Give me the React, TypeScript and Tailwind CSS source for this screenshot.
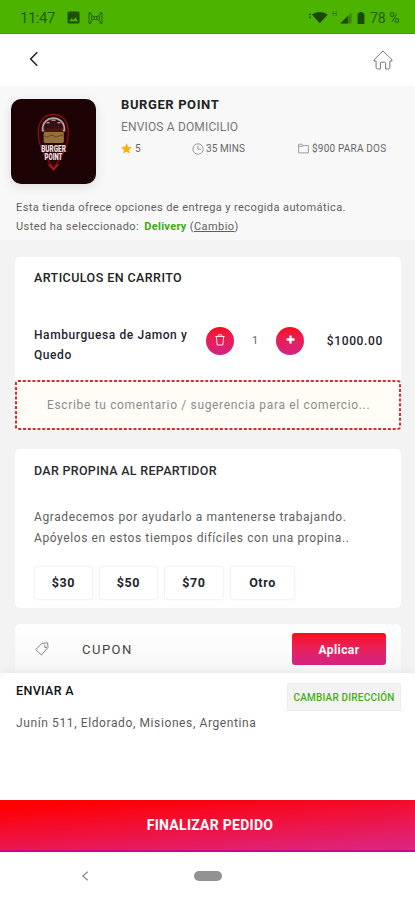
const tips = [
  { label: '$30', width: 'w-[59px]' },
  { label: '$50', width: 'w-[59px]' },
  { label: '$70', width: 'w-[60px]' },
  { label: 'Otro', width: 'w-[65px]' },
];

function StatusBar() {
  return (
    <div className="flex h-[34px] shrink-0 items-center border-b border-[#35a000] bg-[#4cb400] pl-5 pr-[15px] pt-[3px] text-[#235c05]">
      <span className="w-[47px] whitespace-nowrap text-[15px] leading-none tracking-[-0.5px]">11:47</span>
      <svg className="-mt-px h-[13px] w-[13px]" viewBox="0 0 13 13">
        <rect x="0.5" y="0.5" width="12" height="12" rx="1.5" fill="#1f5104" />
        <path d="M2.3 10.2 4.6 7.2 6.3 9 8.5 6.3 11 10.2Z" fill="#4cb400" />
      </svg>
      <svg className="-mt-px ml-2 h-3 w-[15px]" viewBox="0 0 15 12" fill="none" stroke="#235c05" strokeWidth="1">
        <path d="M3.500 .8H1V11.2H3.500M11.500 .8H14V11.2H11.500M1.500 1.300 13.500 10.700M1.500 10.700 13.500 1.300M3.700 4V8M11.300 4V8" />
        <circle cx="7.5" cy="6" r="1.5" fill="#4cb400" />
      </svg>
      <div className="ml-auto flex items-center">
        <svg className="-mt-[2px] h-[13px] w-[19px]" viewBox="0 0 19 13" fill="#194a03">
          <path d="M3 3.8C7 .2 14.4 .2 18.6 3.8L10.8 12.3Z" />
          <path d="M.3 2.5h1.5v1.8H.3zM.3 5.5h1.5v1.8H.3z" />
        </svg>
        <span className="-mt-[7px] ml-[4px] text-[7px] leading-none">H</span>
        <svg className="ml-[3px] h-3 w-3" viewBox="0 0 12 12">
          <path d="M.3 11.5 11.5.5V11.5Z" fill="#3c8606" />
          <path d="M.3 11.5 7.8 4V11.5Z" fill="#194a03" />
        </svg>
        <svg className="ml-[5px] h-3 w-2" viewBox="0 0 8 12" fill="#194a03">
          <path d="M2.4 0h3.2v1.3H7.4V12H.6V1.3h1.8z" />
        </svg>
        <span className="ml-[5px] w-[30px] whitespace-nowrap text-sm leading-none">78 %</span>
      </div>
    </div>
  );
}

function Header() {
  return (
    <header className="flex h-[52px] shrink-0 items-center justify-between bg-white pl-[29px] pr-[22px] pb-[2px]">
      <svg className="h-4 w-[10px]" viewBox="0 0 10 16" fill="none" stroke="#222" strokeWidth="1.5">
        <path d="M8.3 1.3 1.6 8 8.3 14.7" />
      </svg>
      <svg className="mt-[2px] h-5 w-5" viewBox="0 0 20 20" fill="none" stroke="#777" strokeWidth="1">
        <path d="M1 9.8 10 .9 19 9.8V11H16.9V17.5Q16.900 19 15.400 19H12.6V13.2Q12.6 12.2 11.6 12.2H8.4Q7.4 12.2 7.4 13.2V19H4.600Q3.100 19 3.100 17.500V11H1Z" strokeLinejoin="round" />
      </svg>
    </header>
  );
}

function StoreLogo() {
  return (
    <svg className="h-[85px] w-[85px] rounded-[10px] shadow-[0_3px_12px_rgba(0,0,0,0.1)]" viewBox="0 0 86 86">
      <rect width="86" height="86" fill="#1d0204" />
      <path d="M43 71 C39 62 28 53 27.5 36 C27 22 34 15.5 43 15.5 C52 15.5 58.5 22 58 36 C57.5 53 47 62 43 71Z" fill="#2a0305" stroke="#8e1019" strokeWidth="1.2" />
      <path d="M38 66 43 71.500 48 66" fill="none" stroke="#c5202a" strokeWidth="1.3" />
      <path d="M32 32C31 15 55 15 54 32Z" fill="#351016" stroke="#b9a39c" strokeWidth="1.8" />
      <path d="M36 24h3M41 21.500h4M47 24h3" stroke="#a98e8a" strokeWidth="1.4" />
      <path d="M33.500 31.500h19" stroke="#4a1515" strokeWidth="4" />
      <rect x="33" y="33.500" width="20.500" height="11" rx="1.5" fill="#95703c" />
      <path d="M33.500 37.500q2.500 2 5 0t5 0 5 0 4.500 0" fill="none" stroke="#6d431e" strokeWidth="1" />
      <g fill="#f3e6e6" fontFamily="Roboto, sans-serif" fontWeight="900" textAnchor="middle">
        <text x="43" y="53.500" fontSize="9" textLength="25" lengthAdjust="spacingAndGlyphs">BURGER</text>
        <text x="43" y="62" fontSize="9" textLength="18" lengthAdjust="spacingAndGlyphs">POINT</text>
      </g>
    </svg>
  );
}

function StoreInfo() {
  return (
    <section className="h-[154px] shrink-0 bg-[#f8f8f8] text-[#666]">
      <div className="flex h-[112px] pl-[11px] pt-[13px]">
        <StoreLogo />
        <div className="-mt-px ml-[25px] w-[266px] whitespace-nowrap">
          <h1 className="text-[13px] font-bold leading-[13px] tracking-[0.6px] text-[#222]">BURGER POINT</h1>
          <p className="mt-[9px] text-xs leading-[14px] tracking-[0.16px] text-[#777]">ENVIOS A DOMICILIO</p>
          <div className="mt-[8px] flex items-center text-[10px] leading-[13px]">
            <span className="flex w-[71px] items-center gap-[3px]">
              <svg className="h-[11px] w-[11px]" viewBox="0 0 24 24" fill="#fbb20b">
                <path d="m12 .8 3.500 7.400 8 1.100-5.900 5.700 1.500 8.100-7.100-3.900-7.100 3.900 1.500-8.100L.5 9.300l8-1.100z" />
              </svg>
              5
            </span>
            <span className="flex w-[106px] items-center gap-[2px] tracking-[0.1px]">
              <svg className="h-3 w-3" viewBox="0 0 12 12" fill="none" stroke="#888" strokeWidth="0.8">
                <circle cx="6" cy="6" r="5.200" />
                <path d="M6 2.500V6.300H9" />
              </svg>
              35 MINS
            </span>
            <span className="flex items-center gap-[3px] tracking-[0.2px]">
              <svg className="h-[11px] w-[11px]" viewBox="0 0 11 11" fill="none" stroke="#888" strokeWidth="0.8">
                <path d="M.6 9.900V1.200H4L5 2.600H10.400V9.900ZM.6 3.300H5" />
              </svg>
              $900 PARA DOS
            </span>
          </div>
        </div>
      </div>
      <div className="whitespace-nowrap pl-[16px] text-[11px] leading-[19px] text-[#606060]">
        <p className="tracking-[0.41px]">Esta tienda ofrece opciones de entrega y recogida automática.</p>
        <p className="tracking-[0.43px]">
          Usted ha seleccionado: <span className="ml-[2px] font-bold tracking-[0.3px] text-[#3cac0c]">Delivery</span> (<span className="underline">Cambio</span>)
        </p>
      </div>
    </section>
  );
}

function CartCard() {
  return (
    <section className="h-[173px] shrink-0 rounded-[5px] bg-white text-[#252530]">
      <div className="h-[123px] pl-[19px] pr-[18px] pt-[13px]">
        <h2 className="whitespace-nowrap text-[12.5px] font-medium leading-4 tracking-[0.43px] text-[#222]">ARTICULOS EN CARRITO</h2>
        <div className="mt-[39px] flex">
          <p className="w-[172px] whitespace-nowrap text-xs font-medium leading-[20px] tracking-[0.58px]">
            Hamburguesa de Jamon y<br />Quedo
          </p>
          <div className="mt-[2px] flex h-7 flex-1 items-center">
            <button className="flex h-7 w-7 items-center justify-center rounded-full bg-linear-to-b from-[#fb0712] to-[#d32082]">
              <svg className="mb-[2px] h-3 w-[10px]" viewBox="0 0 10 12" fill="none" stroke="#fff" strokeOpacity="0.85" strokeWidth="1">
                <path d="M.3 2.500H9.700M3 2.300 3.500 .8H6.500L7 2.300M1.400 2.800 2.200 11H7.800L8.600 2.800" />
              </svg>
            </button>
            <span className="w-[42px] text-center text-[11px] text-[#666]">1</span>
            <button className="flex h-7 w-7 items-center justify-center rounded-full bg-linear-to-b from-[#fb0712] to-[#d32082]">
              <svg className="mb-[3px] h-[9px] w-[9px]" viewBox="0 0 9 9" stroke="#fff" strokeWidth="2.300">
                <path d="M4.500 .5V8.500M.5 4.500H8.500" />
              </svg>
            </button>
            <span className="ml-auto whitespace-nowrap text-xs font-medium tracking-[0.65px]">$1000.00</span>
          </div>
        </div>
      </div>
      <div className="relative flex h-[50px] items-center rounded-[3px] bg-[#fffdf6] pl-[32px] text-xs tracking-[0.66px] text-[#8c8c8c]">
        <svg className="absolute inset-0 h-full w-full" fill="none" stroke="#d52b31" strokeWidth="2" strokeDasharray="3 1.800">
          <rect x="1" y="1" width="384" height="48" rx="2" />
        </svg>
        <span className="whitespace-nowrap">Escribe tu comentario / sugerencia para el comercio...</span>
      </div>
    </section>
  );
}

function TipCard() {
  return (
    <section className="mt-[19px] h-[159px] shrink-0 rounded-[5px] bg-white pl-[19px] pt-[14px]">
      <h2 className="text-[12.5px] font-medium leading-4 tracking-[0.3px] text-[#2b2b2f]">DAR PROPINA AL REPARTIDOR</h2>
      <p className="mt-[28px] whitespace-nowrap text-xs leading-[21px] tracking-[0.6px] text-[#606060]">
        Agradecemos por ayudarlo a mantenerse trabajando.<br />
        Apóyelos en estos tiempos difíciles con una propina..
      </p>
      <div className="mt-[17px] flex gap-[6px]">
        {tips.map((tip) => (
          <button
            key={tip.label}
            className={`${tip.width} h-[34px] rounded-[3px] border border-[#f3f3f3] bg-white text-[12.5px] font-bold tracking-[0.6px] text-[#24242c] shadow-[0_0_3px_rgba(0,0,0,0.04)]`}
          >
            {tip.label}
          </button>
        ))}
      </div>
    </section>
  );
}

function CouponCard() {
  return (
    <section className="mt-4 flex h-[65px] shrink-0 items-start rounded-[5px] bg-linear-to-b from-white to-[#f7f7f7] to-75% pl-[20px] pr-[15px] pt-[9px]">
      <div className="flex h-[32px] flex-1 items-center">
        <svg className="h-[14px] w-[14px]" viewBox="0 0 14 14" fill="none" stroke="#777" strokeWidth="0.9">
          <path d="M.8 7.600 6.800 1.400 12.600.8 13 5.500 6.400 13Z" strokeLinejoin="round" />
          <path d="M9.800 2.600V5.400H12" />
        </svg>
        <span className="ml-[33px] mt-[2px] text-[13px] tracking-[1.5px] text-[#444]">CUPON</span>
      </div>
      <button className="h-[32px] w-[94px] rounded-[3px] bg-linear-to-b from-[#fd0710] to-[#d32283] pt-[2px] text-xs font-bold tracking-[0.4px] text-white">
        Aplicar
      </button>
    </section>
  );
}

function AddressPanel() {
  return (
    <section className="z-10 h-[127px] shrink-0 rounded-t-[8px] bg-white pl-[16px] pr-[14px] shadow-[0_-3px_10px_rgba(0,0,0,0.05)]">
      <div className="flex justify-between pt-[10px]">
        <h2 className="text-[12.5px] font-medium leading-4 tracking-[0.35px] text-[#111]">ENVIAR A</h2>
        <button className="h-[28px] w-[114px] whitespace-nowrap border border-[#ececec] bg-[#f3f3f3] text-[10px] font-medium tracking-[0.2px] text-[#48ad17]">
          CAMBIAR DIRECCIÓN
        </button>
      </div>
      <p className="mt-[4px] whitespace-nowrap text-xs leading-4 tracking-[0.61px] text-[#5c5c5c]">Junín 511, Eldorado, Misiones, Argentina</p>
    </section>
  );
}

export default function App() {
  return (
    <div className="flex h-[900px] w-[415px] flex-col overflow-hidden bg-white font-['Roboto',sans-serif]">
      <StatusBar />
      <Header />
      <StoreInfo />
      <main className="flex h-[433px] shrink-0 flex-col overflow-hidden bg-[#f3f3f3] pl-[15px] pr-[14px] pt-[17px]">
        <CartCard />
        <TipCard />
        <CouponCard />
      </main>
      <AddressPanel />
      <button className="h-[52px] shrink-0 border-b-2 border-[#c90883] bg-linear-[176deg] from-[#ff0003] from-10% to-[#dc2785] pl-[5px] text-sm font-bold tracking-[0.27px] text-white">
        FINALIZAR PEDIDO
      </button>
      <nav className="flex h-[48px] shrink-0 items-center pl-[81px]">
        <svg className="h-[10px] w-[8px]" viewBox="0 0 8 10" fill="none" stroke="#8c8c8c" strokeWidth="1.300">
          <path d="M6.800 .8 1.800 5 6.800 9.200" />
        </svg>
        <span className="ml-[105px] h-[10px] w-[28px] rounded-full bg-[#929292]" />
      </nav>
    </div>
  );
}
